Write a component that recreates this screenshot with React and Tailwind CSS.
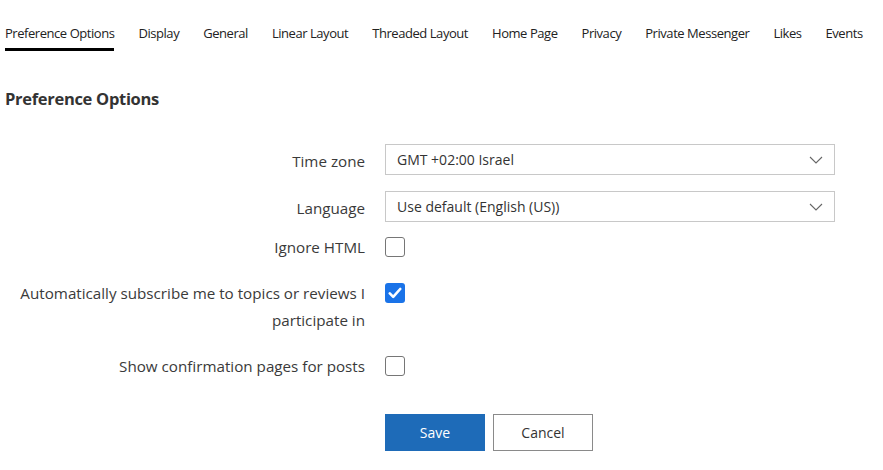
import React from "react";

const tabs = ["Preference Options","Display","General","Linear Layout","Threaded Layout","Home Page","Privacy","Private Messenger","Likes","Events"];

function Chevron() {
  return (
    <svg width="14" height="8" viewBox="0 0 14 8" fill="none" className="shrink-0">
      <path d="M1 1l6 6 6-6" stroke="#666" strokeWidth="1.1" />
    </svg>
  );
}

function Select({ value }) {
  return (
    <div className="w-[450px] h-[31px] border border-[#c8c8c8] bg-white flex items-center justify-between pl-[11px] pr-[11px] text-[14px] text-[#333]">
      <span>{value}</span>
      <Chevron />
    </div>
  );
}

function Check({ checked }) {
  return checked ? (
    <div className="w-[20px] h-[20px] rounded-[3px] bg-[#1a73e8] flex items-center justify-center">
      <svg width="14" height="12" viewBox="0 0 14 12" fill="none">
        <path d="M1.8 6.4l3.4 3.4L12.2 2" stroke="#fff" strokeWidth="2.6" strokeLinecap="round" strokeLinejoin="round" />
      </svg>
    </div>
  ) : (
    <div className="w-[20px] h-[20px] rounded-[3px] border border-[#767676] bg-white" />
  );
}

export default function App() {
  return (
    <div className="w-[883px] h-[470px] bg-white text-[#333] overflow-hidden" style={{ fontFamily: '"Open Sans", "Noto Sans", sans-serif' }}>
      <div className="flex pl-[5px] pt-[23px] text-[13px] tracking-[-0.45px] text-[#222]">
        {tabs.map((t, i) => (
          <div key={t} className="mr-[24px] flex flex-col">
            <span className="h-[20px] leading-[20px] whitespace-nowrap">{t}</span>
            <div className={i === 0 ? "mt-[5px] h-[3px] bg-black" : "mt-[5px] h-[3px]"} />
          </div>
        ))}
      </div>
      <h2 className="pl-[5px] mt-[36px] text-[16.5px] font-bold text-[#333] leading-[24px] tracking-[-0.3px]">Preference Options</h2>
      <div className="mt-[33px] flex flex-col text-[15.2px] text-[#3a3a3a]">
        <div className="flex items-center gap-[20px] h-[31px]">
          <div className="w-[365px] text-right pt-[3px]">Time zone</div>
          <Select value="GMT +02:00 Israel" />
        </div>
        <div className="flex items-center gap-[20px] h-[31px] mt-[16px]">
          <div className="w-[365px] text-right pt-[3px]">Language</div>
          <Select value="Use default (English (US))" />
        </div>
        <div className="flex items-center gap-[20px] mt-[14px]">
          <div className="w-[365px] text-right leading-[22px]">Ignore HTML</div>
          <Check />
        </div>
        <div className="flex items-start gap-[20px] mt-[22px]">
          <div className="w-[365px] pl-[20px] text-right leading-[27px]">Automatically subscribe me to topics or reviews I participate in</div>
          <div className="pt-[3px]"><Check checked /></div>
        </div>
        <div className="flex items-center gap-[20px] mt-[21px]">
          <div className="w-[365px] text-right leading-[22px]">Show confirmation pages for posts</div>
          <Check />
        </div>
        <div className="flex gap-[8px] ml-[385px] mt-[37px] text-[14px]">
          <button className="w-[100px] h-[37px] bg-[#1e6bb8] text-white">Save</button>
          <button className="w-[100px] h-[37px] border border-[#8a8a8a] bg-white text-[#333]">Cancel</button>
        </div>
      </div>
    </div>
  );
}
